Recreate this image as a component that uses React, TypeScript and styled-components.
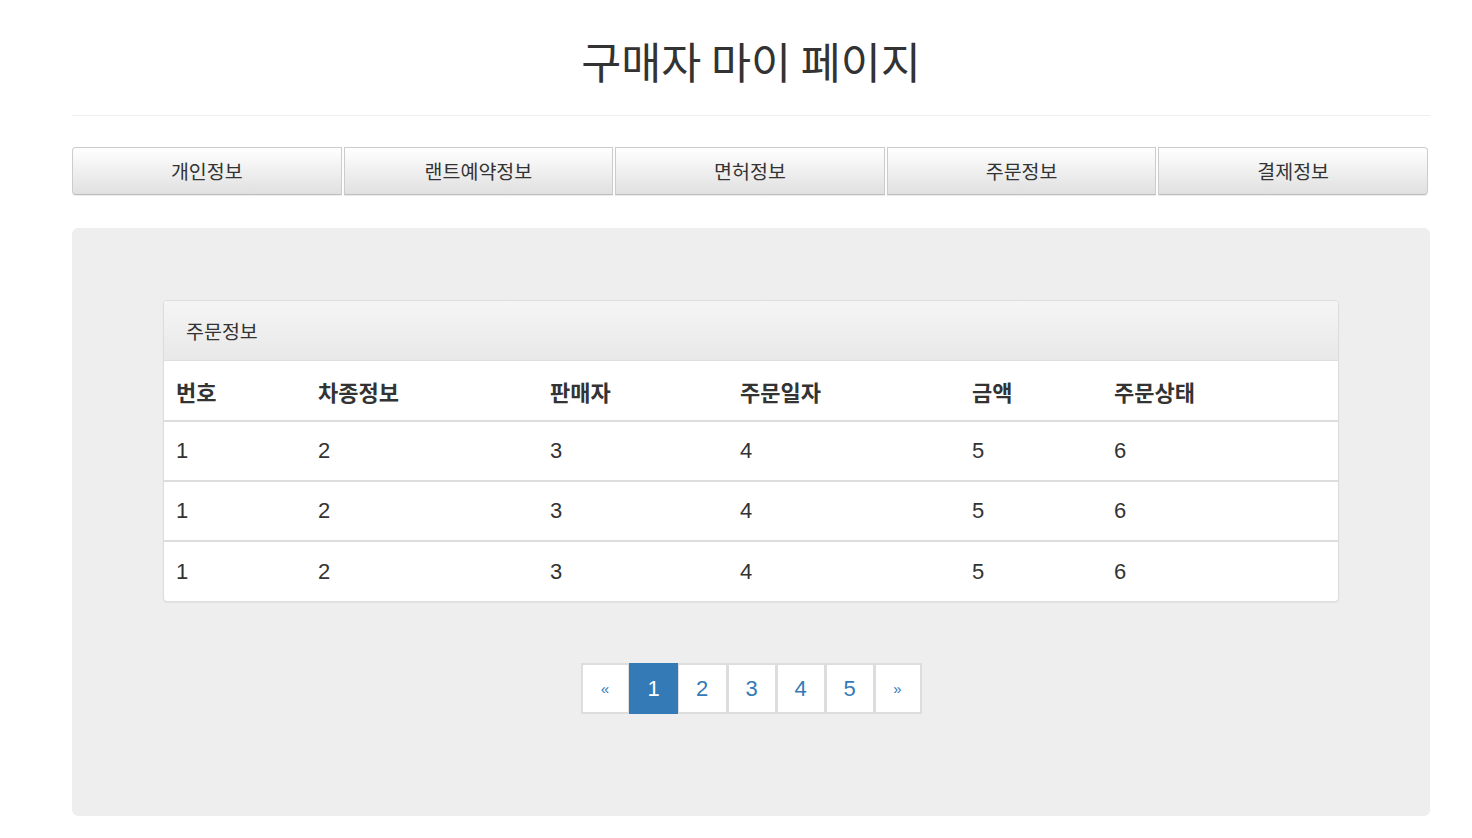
import React from "react";
import styled, { createGlobalStyle } from "styled-components";

const Global = createGlobalStyle`
  html, body { margin: 0; padding: 0; background: #fff; }
  body {
    font-family: "Liberation Sans", "Noto Sans CJK KR", sans-serif;
    color: #333;
  }
  * { box-sizing: border-box; }
`;

const Page = styled.div`
  padding: 0 42px 0 72px;
`;

const Header = styled.header`
  padding: 36px 0 29px;
  border-bottom: 1px solid #eee;
  text-align: center;
`;

const Title = styled.h1`
  margin: 0;
  font-size: 43.5px;
  line-height: 50px;
  font-weight: 400;
  color: #333;
  font-family: "Noto Sans CJK KR", sans-serif;
`;

const Tabs = styled.nav`
  display: flex;
  gap: 2px;
  margin-top: 31px;
  width: 1356px;
`;

const TabButton = styled.button<{ $first?: boolean; $last?: boolean }>`
  flex: 1;
  height: 48px;
  border: 1px solid #ccc;
  border-bottom-color: #bdbdbd;
  border-radius: ${(p) =>
    p.$first ? "4px 0 0 4px" : p.$last ? "0 4px 4px 0" : "0"};
  background: linear-gradient(to bottom, #fff 0%, #e0e0e0 100%);
  box-shadow: inset 0 1px 0 rgba(255, 255, 255, 0.15),
    0 1px 1px rgba(0, 0, 0, 0.075);
  font-family: "Noto Sans CJK KR", sans-serif;
  font-size: 19.5px;
  color: #333;
  padding: 0 0 2px;
  cursor: pointer;
`;

const Jumbotron = styled.section`
  margin-top: 33px;
  background: #eee;
  border-radius: 6px;
  padding: 72px 91px 102px;
`;

const Panel = styled.div`
  background: #fff;
  border: 1px solid #ddd;
  border-radius: 4px;
  box-shadow: 0 1px 2px rgba(0, 0, 0, 0.05);
  overflow: hidden;
`;

const PanelHeading = styled.div`
  height: 60px;
  display: flex;
  align-items: center;
  padding: 0 22px;
  background: linear-gradient(to bottom, #f5f5f5 0%, #e8e8e8 100%);
  border-bottom: 1px solid #ddd;
  font-family: "Noto Sans CJK KR", sans-serif;
  font-size: 19.5px;
  color: #333;
`;

const Table = styled.table`
  width: 100%;
  border-collapse: collapse;
  table-layout: fixed;
`;

const Th = styled.th<{ $w: number }>`
  width: ${(p) => p.$w}px;
  height: 60px;
  padding: 0 12px;
  text-align: left;
  font-size: 22px;
  font-weight: 700;
  color: #333;
  border-bottom: 2px solid #ddd;
`;

const Td = styled.td`
  height: 60px;
  padding: 0 12px;
  font-size: 22px;
  color: #333;
`;

const Tr = styled.tr`
  & + & td {
    border-top: 2px solid #ddd;
  }
`;

const Pager = styled.ul`
  display: flex;
  justify-content: center;
  list-style: none;
  margin: 61px 0 0;
  padding: 0;
`;

const PageItem = styled.li<{ $active?: boolean; $w: number }>`
  width: ${(p) => p.$w}px;
  height: 51px;
  display: flex;
  align-items: center;
  justify-content: center;
  border: ${(p) => (p.$active ? "none" : "2px solid #ddd")};
  margin-left: ${(p) => (p.$active ? "-1px" : "0")};
  margin-right: ${(p) => (p.$active ? "-1px" : "0")};
  background: ${(p) => (p.$active ? "#337ab7" : "#fff")};
  color: ${(p) => (p.$active ? "#fff" : "#337ab7")};
  font-size: 22px;
  & + & {
    border-left-width: ${(p) => (p.$active ? "0" : "1px")};
  }
`;

const Arrow = styled.span`
  font-size: 15px;
`;

const tabs = ["개인정보", "랜트예약정보", "면허정보", "주문정보", "결제정보"];
const cols: [string, number][] = [
  ["번호", 142],
  ["차종정보", 232],
  ["판매자", 190],
  ["주문일자", 232],
  ["금액", 142],
  ["주문상태", 236],
];
const rows = [
  ["1", "2", "3", "4", "5", "6"],
  ["1", "2", "3", "4", "5", "6"],
  ["1", "2", "3", "4", "5", "6"],
];

export default function App() {
  return (
    <>
      <Global />
      <Page>
        <Header>
          <Title>구매자 마이 페이지</Title>
        </Header>
        <Tabs>
          {tabs.map((t, i) => (
            <TabButton key={t} $first={i === 0} $last={i === tabs.length - 1}>
              {t}
            </TabButton>
          ))}
        </Tabs>
        <Jumbotron>
          <Panel>
            <PanelHeading>주문정보</PanelHeading>
            <Table>
              <thead>
                <tr>
                  {cols.map(([c, w]) => (
                    <Th key={c} $w={w}>
                      {c}
                    </Th>
                  ))}
                </tr>
              </thead>
              <tbody>
                {rows.map((r, i) => (
                  <Tr key={i}>
                    {r.map((v, j) => (
                      <Td key={j}>{v}</Td>
                    ))}
                  </Tr>
                ))}
              </tbody>
            </Table>
          </Panel>
          <Pager>
            <PageItem $w={49}>
              <Arrow>«</Arrow>
            </PageItem>
            <PageItem $w={50} $active>
              1
            </PageItem>
            <PageItem $w={50}>2</PageItem>
            <PageItem $w={49}>3</PageItem>
            <PageItem $w={49}>4</PageItem>
            <PageItem $w={49}>5</PageItem>
            <PageItem $w={47}>
              <Arrow>»</Arrow>
            </PageItem>
          </Pager>
        </Jumbotron>
      </Page>
    </>
  );
}
